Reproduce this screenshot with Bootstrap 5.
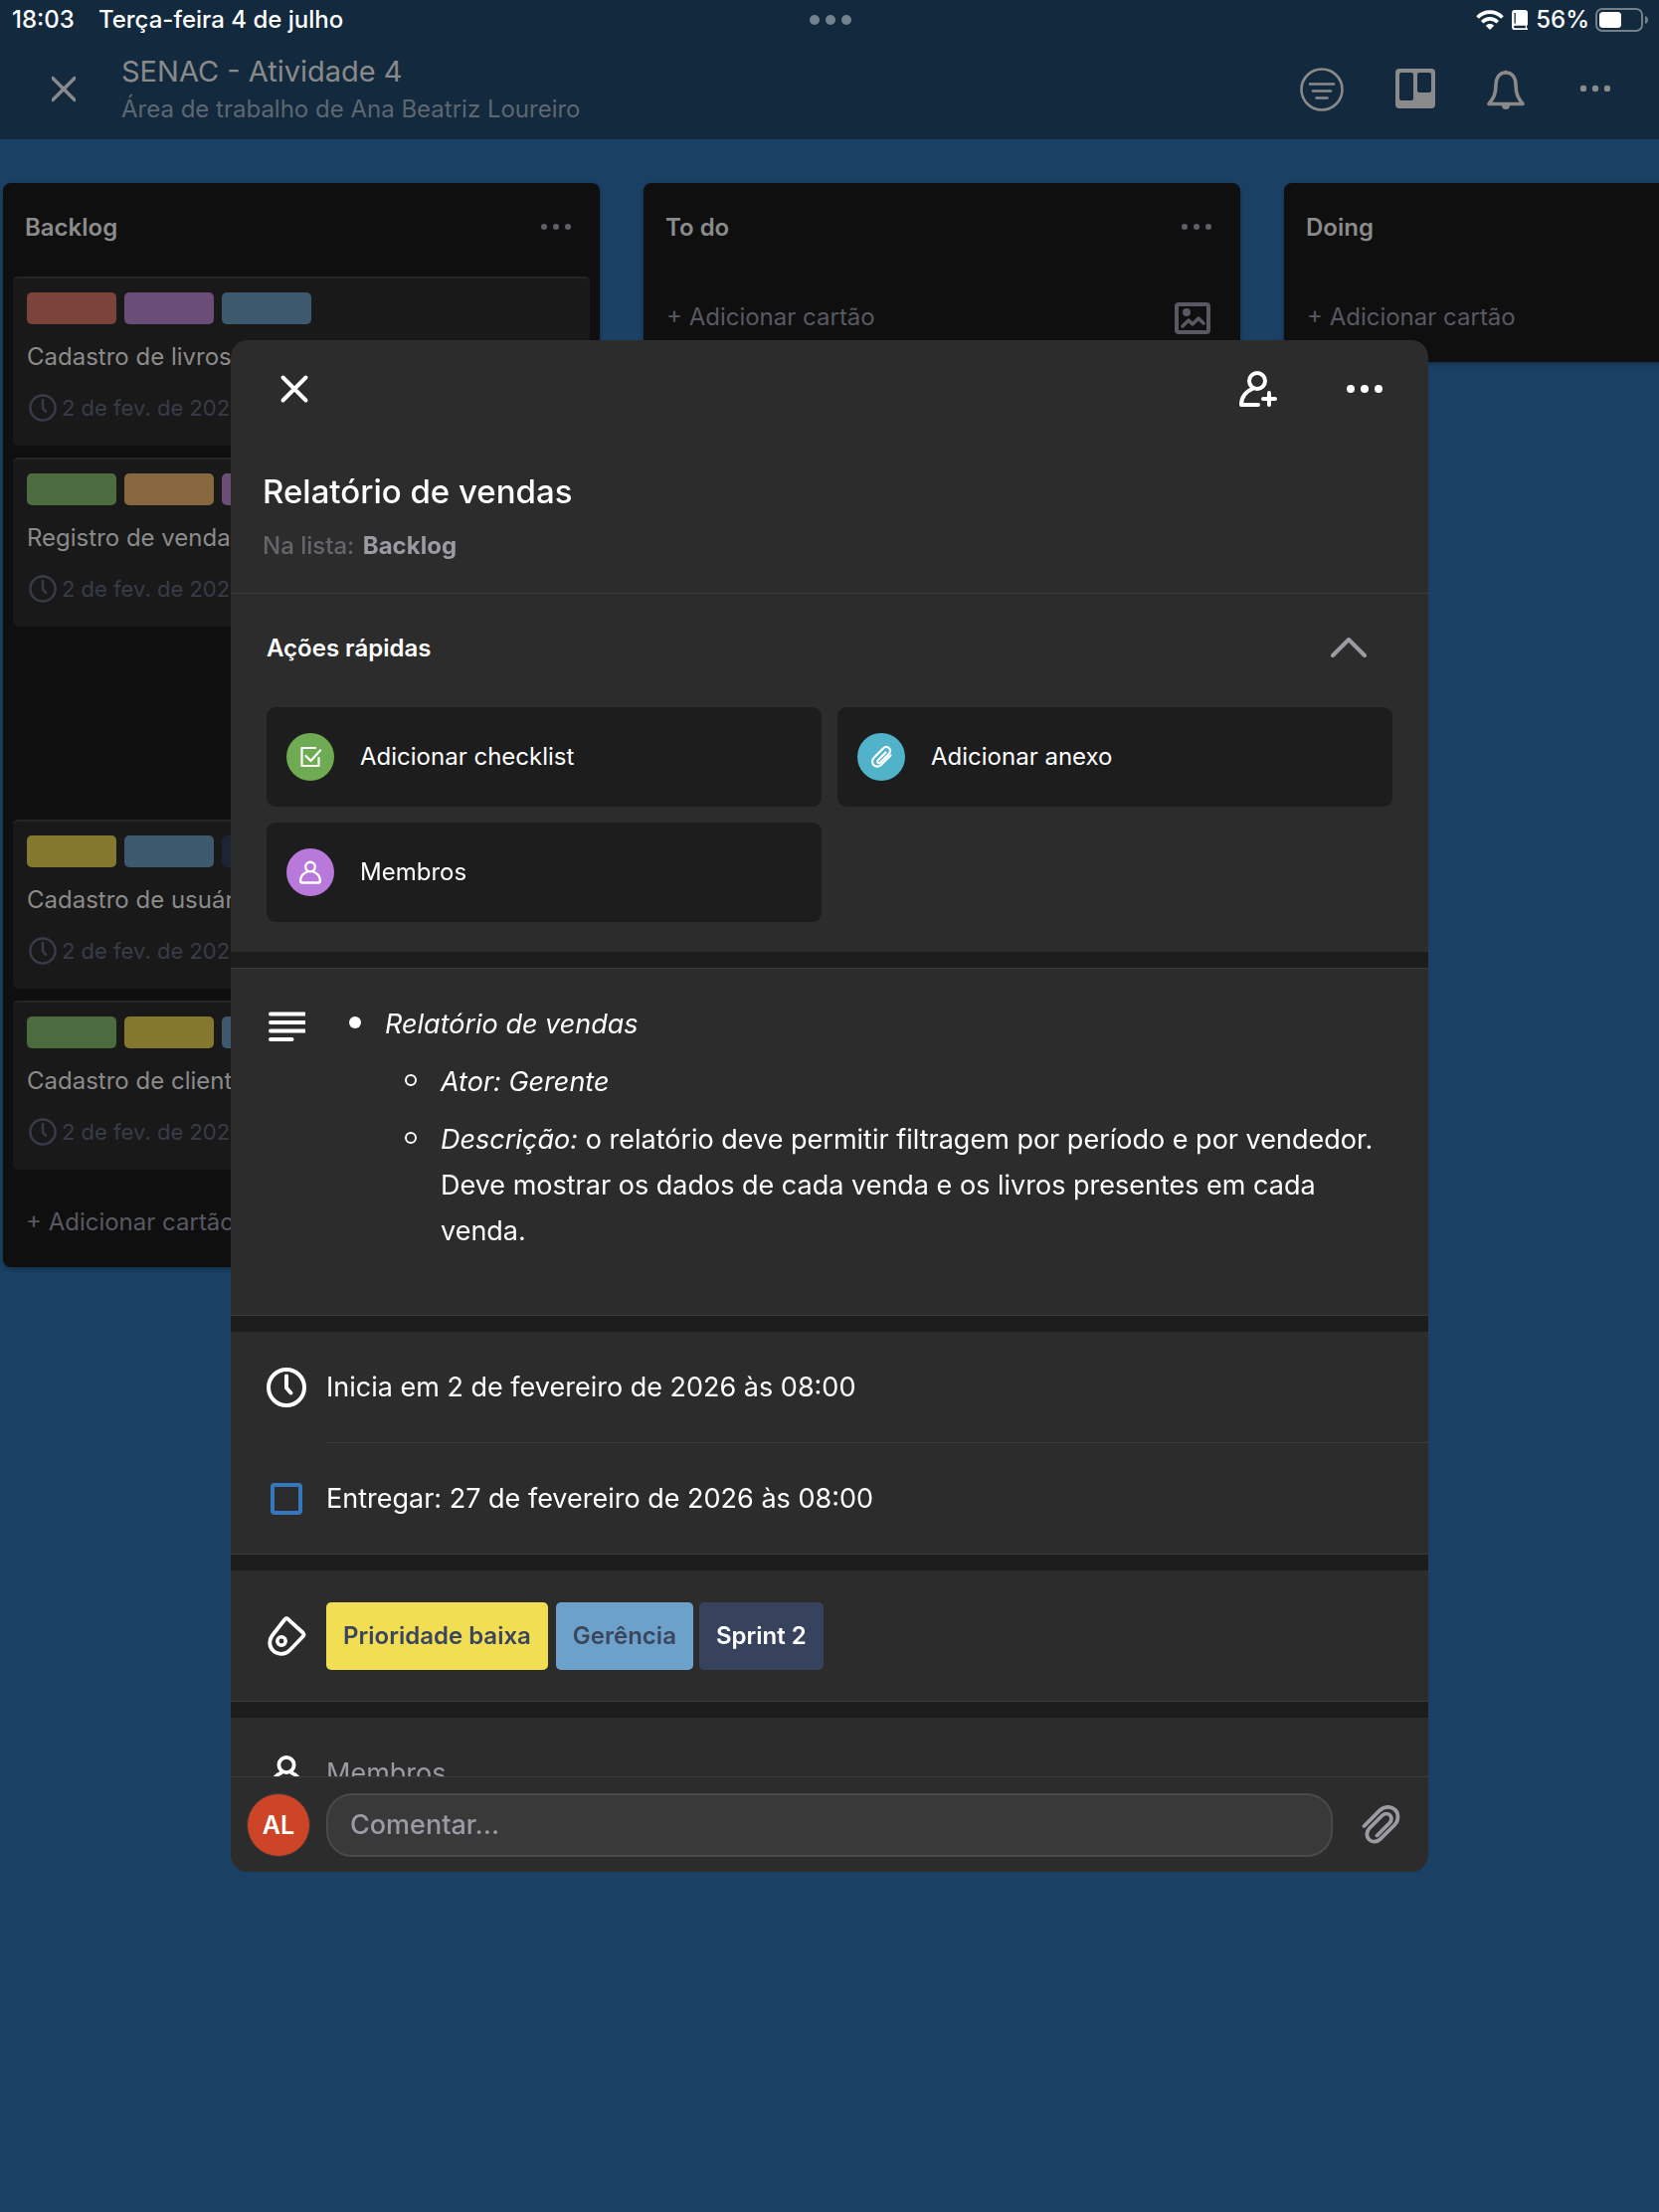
<!DOCTYPE html>
<html lang="pt-BR">
<head>
<meta charset="utf-8">
<meta name="viewport" content="width=device-width, initial-scale=1">
<title>SENAC - Atividade 4</title>
<link href="https://cdn.jsdelivr.net/npm/bootstrap@5.3.0/dist/css/bootstrap.min.css" rel="stylesheet">
<style>
  body { font-family: Inter, Roboto, sans-serif; font-size: 24px; line-height: 32px; background: #1a4064; color: #fff; min-height: 100vh; overflow: hidden; }
  svg { display: block; flex: none; }
  .ico { fill: none; stroke: currentColor; stroke-linecap: round; stroke-linejoin: round; }
  .plain { background: none; border: 0; padding: 0; color: inherit; font: inherit; text-align: left; }
  .app-head { background: #13293d; }
  .status { height: 40px; padding: 0 10px 0 12px; font-weight: 500; font-size: 24px; }
  .status > div { flex: 1 1 0; }
  .status .battery { margin-left: 6px; }
  .board-bar { height: 100px; padding: 0 49px 0 52px; color: #8a8a8a; }
  .board-titles { margin-left: 46px; padding-top: 2px; }
  .board-name { font-size: 29px; line-height: 38px; }
  .board-area { font-size: 24px; line-height: 38px; color: #5c6770; }
  .board-tools { gap: 52px; }
  .lists { padding: 44px 0 16px 3px; gap: 44px; overflow: hidden; }
  .list-col { flex: 0 0 600px; background: #0f0f0f; border-radius: 8px; box-shadow: 0 2px 4px rgba(0,0,0,.3); color: #8b8b8b; }
  .col-head { height: 90px; padding: 0 29px 0 22px; color: #5f6067; }
  .col-head h2 { font-size: 24px; line-height: 32px; font-weight: 600; color: #8b8b8b; }
  .col-foot { height: 90px; padding: 0 30px 0 23px; color: #585962; }
  .cards { padding: 4px 10px 8px; gap: 12px; }
  .task { height: 170px; background: #191919; border-top: 2px solid #262626; border-radius: 5px; padding: 14px; }
  .task.moving { visibility: hidden; }
  .chip { width: 90px; height: 32px; border-radius: 5px; }
  .c-red { background: #7b443b; } .c-purple { background: #6a4e78; } .c-blue { background: #3c596e; }
  .c-green { background: #4c6b3f; } .c-orange { background: #876740; } .c-yellow { background: #83782d; } .c-navy { background: #1d2435; }
  .task-name { margin-top: 17px; }
  .task-date { margin-top: 19px; gap: 5px; padding-left: 2px; font-size: 22px; color: #383c48; white-space: nowrap; }
  .overlay { position: fixed; inset: 0; z-index: 10; }
  .sheet { width: calc(100% - 464px); height: calc(100% - 684px); background: #2c2c2c; border-radius: 17px; overflow: hidden; }
  .sheet-top { height: 98px; padding: 0 44px 0 48px; }
  .sheet-tools { gap: 67px; }
  .sheet-title { padding: 24px 32px 22px; border-bottom: 1px solid #3a3a3a; }
  .sheet-title h1 { font-size: 33px; line-height: 60px; font-weight: 500; }
  .in-list { line-height: 50px; font-weight: 500; color: #66656a; }
  .in-list strong { color: #9c9ba3; font-weight: 700; margin-left: 2px; }
  .sheet-scroll { flex: 1 1 0; min-height: 0; overflow: hidden; background: #1d1d1d; }
  .part { background: #2c2c2c; border-bottom: 1px solid #3a3a3a; margin-bottom: 16px; }
  .part.quick { border: 0; padding: 0 36px 30px; }
  .quick-head { height: 110px; margin-bottom: 4px; padding-right: 26px; }
  .quick-head h2 { font-size: 24px; line-height: 32px; font-weight: 600; }
  .quick-grid { display: grid; grid-template-columns: 1fr 1fr; gap: 16px; }
  .quick-btn { height: 100px; padding: 0 20px; gap: 26px; border-radius: 9px; background: #1d1d1d; }
  .disc { width: 48px; height: 48px; border-radius: 50%; flex: none; }
  .d-green { background: #6eab52; } .d-cyan { background: #51b3ca; } .d-violet { background: #b879db; }
  .lead-ico { width: 40px; flex: none; }
  .big { font-size: 27px; line-height: 46px; }
  .desc { border-top: 1px solid #3a3a3a; padding: 33px 36px 61px; gap: 43px; }
  .desc ul { list-style: none; margin: 0; padding: 0; }
  .desc li { padding-left: 36px; }
  .desc li::before { content: ""; display: inline-block; width: 12px; height: 12px; border-radius: 50%; background: #fff; margin: 0 24px 0 -36px; vertical-align: 5px; }
  .desc ul ul { padding-left: 20px; }
  .desc ul ul li { margin-top: 12px; }
  .desc ul ul li::before { background: none; border: 2px solid #fff; }
  .line-row { padding-left: 36px; gap: 20px; }
  .line-row > .cell { flex: 1; height: 111px; }
  .line-row > .ruled { height: 112px; border-bottom: 1px solid #3a3a3a; }
  .due-box { appearance: none; width: 32px; height: 32px; border: 4px solid #3478be; border-radius: 4px; background: none; margin: 0; }
  .tags { padding: 32px 36px 31px; }
  .tag { height: 68px; padding: 0 17px; border-radius: 5px; font-size: 24px; font-weight: 600; color: #3b465c; }
  .t-yellow { background: #f1de53; } .t-blue { background: #6ca1cb; margin-left: 8px; } .t-navy { background: #37435d; color: #fff; margin-left: 6px; }
  .muted { color: #9c9ba3; }
  .compose { height: 96px; border-top: 1px solid #3d3d3d; padding: 0 28px 0 16px; gap: 16px; }
  .avatar { width: 64px; height: 64px; border-radius: 50%; border: 1px solid #3a3a3a; background: #cd4526; font-size: 25px; font-weight: 600; flex: none; }
  .compose input { flex: 1; min-width: 0; height: 64px; border: 2px solid #4a4a4a; border-radius: 26px; background: #393939; color: #fff; padding: 0 22px; font-size: 27px; font-weight: 500; outline: 0; }
  .compose input::placeholder { color: #9c9ba3; opacity: 1; }
  .compose .plain { margin-left: 12px; }
</style>
<script src="https://cdn.jsdelivr.net/npm/bootstrap@5.3.0/dist/js/bootstrap.bundle.min.js"></script>
</head>
<body>
<svg width="0" height="0" class="position-absolute" aria-hidden="true">
  <symbol id="i-clock" viewBox="0 0 40 40"><circle cx="20" cy="20" r="18"/><path d="M20 8.500V20.500L24.500 25.500"/></symbol>
  <symbol id="i-clip" viewBox="0 0 40 40"><path d="M2.500 21 17.500 5.800C22.500.8 29.500.8 33.500 4.500S37.500 15.500 33 20L19 33.800C15.500 37.300 10.500 37.500 7.500 34.500S4.500 26.500 8 23L20.500 10.500C23 8 26.500 8 28.500 10S30.500 15.500 28 18L15.500 30.500" transform="translate(1 0)"/></symbol>
  <symbol id="i-clip-sm" viewBox="0 0 24 24"><path d="M16.500 7.500 8.800 15.300C8 16.200 8 17.200 8.700 17.800S10.300 18.300 11.200 17.500L19.500 9.200C21.500 7.200 21.500 4.700 19.900 3.200S15.800 1.700 13.900 3.600L5 12.500C2.500 15 2.500 18.300 4.500 20.300S9.800 22.200 12.200 19.800L21.500 10.500"/></symbol>
  <symbol id="i-user" viewBox="0 0 40 40"><circle cx="20" cy="11" r="8"/><path d="M14.500 19.500C8 22 3.500 27.500 3.500 34.500Q3.500 37.500 6 37.500H34Q36.500 37.500 36.500 34.500C36.500 27.500 32 22 25.500 19.500"/></symbol>
</svg>

<header class="app-head">
  <div class="status d-flex align-items-center">
    <div class="d-flex"><span>18:03</span><span class="ms-4">Terça-feira 4 de julho</span></div>
    <svg width="42" height="10" viewBox="0 0 42 10" fill="#73818c"><circle cx="5" cy="5" r="5"/><circle cx="21" cy="5" r="5"/><circle cx="37" cy="5" r="5"/></svg>
    <div class="d-flex align-items-center justify-content-end">
      <svg width="28" height="20" viewBox="0 0 28 20" fill="none" stroke="#fff" stroke-width="3.600"><path d="M1.500 7.500C8.500.3 19.500.3 26.500 7.500M6.200 12.200C10.600 7.800 17.400 7.800 21.800 12.200"/><path d="M14 20 9.800 15.700C12 13.500 16 13.500 18.200 15.700Z" fill="#fff" stroke="none"/></svg>
      <svg width="16" height="20" viewBox="0 0 16 20" fill="#fff" class="ms-2"><path fill-rule="evenodd" d="M3 0H13Q16 0 16 3V14.500Q16 15.500 15 15.700V18.300H16V20H2.800Q0 20 0 17.200V3Q0 0 3 0ZM2.500 3V13.500H3.800V3ZM3.500 15.700Q2 15.700 2 17T3.500 18.300H13.800V15.700Z"/></svg>
      <span class="ms-2">56%</span>
      <svg width="54" height="24" viewBox="0 0 54 24" class="battery"><rect x="1" y="1" width="46" height="22" rx="6" fill="none" stroke="#71808b" stroke-width="2"/><rect x="4" y="4" width="22" height="16" rx="3.500" fill="#fff"/><path d="M50 8Q53 9 53 12T50 16Z" fill="#71808b"/></svg>
    </div>
  </div>
  <div class="board-bar d-flex align-items-center justify-content-between">
    <div class="d-flex align-items-center">
      <button class="plain" type="button" aria-label="Fechar quadro"><svg class="ico" width="24" height="28" viewBox="0 0 24 28" stroke-width="3.400"><path d="M1 2.500 23 24.500M23 2.500 1 24.500"/></svg></button>
      <div class="board-titles">
        <div class="board-name">SENAC - Atividade 4</div>
        <div class="board-area">Área de trabalho de Ana Beatriz Loureiro</div>
      </div>
    </div>
    <div class="board-tools d-flex align-items-center">
      <button class="plain" type="button" aria-label="Filtrar"><svg class="ico" width="44" height="44" viewBox="0 0 44 44" stroke-width="2.600"><circle cx="22" cy="22" r="20.500"/><path d="M10 16.500H34M13 23.500H31M16.500 30.500H27.500"/></svg></button>
      <button class="plain" type="button" aria-label="Quadros"><svg width="40" height="42" viewBox="0 0 40 42" fill="currentColor"><path fill-rule="evenodd" d="M4 0H36Q40 0 40 4V36Q40 40 36 40H4Q0 40 0 36V4Q0 0 4 0ZM6 4Q4 4 4 6V30Q4 32 6 32H16Q18 32 18 30V6Q18 4 16 4ZM24 4Q22 4 22 6V22Q22 24 24 24H34Q36 24 36 22V6Q36 4 34 4Z"/></svg></button>
      <button class="plain" type="button" aria-label="Notificações"><svg class="ico" width="38" height="40" viewBox="1 0 38 40" stroke-width="3.600"><path d="M20 3C13 3 10 9 10 15 10 25 7.500 29 3 34.500H37C32.500 29 30 25 30 15 30 9 27 3 20 3Z"/><path d="M16 35.500Q16 40 20 40T24 35.500ZM18.500 2.500Q18.500 .5 20 .5T21.500 2.500Z" fill="currentColor" stroke="none"/></svg></button>
      <button class="plain" type="button" aria-label="Mais"><svg width="34" height="10" viewBox="0 0 34 10" fill="currentColor"><circle cx="7" cy="4" r="3.200"/><circle cx="19" cy="4" r="3.200"/><circle cx="31" cy="4" r="3.200"/></svg></button>
    </div>
  </div>
</header>

<main class="lists d-flex align-items-start">
  <section class="list-col">
    <div class="col-head d-flex align-items-center justify-content-between"><h2 class="m-0">Backlog</h2><button class="plain" type="button" aria-label="Opções de Backlog"><svg width="30" height="8" viewBox="0 0 30 8" fill="currentColor"><circle cx="3" cy="3" r="3"/><circle cx="15" cy="3" r="3"/><circle cx="27" cy="3" r="3"/></svg></button></div>
    <div class="cards d-flex flex-column">
      <article class="task"><div class="d-flex gap-2"><span class="chip c-red"></span><span class="chip c-purple"></span><span class="chip c-blue"></span></div><div class="task-name">Cadastro de livros</div><div class="task-date d-flex align-items-center"><svg class="ico" width="28" height="28" stroke-width="3.500"><use href="#i-clock"/></svg>2 de fev. de 202</div></article>
      <article class="task"><div class="d-flex gap-2"><span class="chip c-green"></span><span class="chip c-orange"></span><span class="chip c-purple"></span></div><div class="task-name">Registro de venda</div><div class="task-date d-flex align-items-center"><svg class="ico" width="28" height="28" stroke-width="3.500"><use href="#i-clock"/></svg>2 de fev. de 202</div></article>
      <div class="task moving"></div>
      <article class="task"><div class="d-flex gap-2"><span class="chip c-yellow"></span><span class="chip c-blue"></span><span class="chip c-navy"></span></div><div class="task-name">Cadastro de usuár</div><div class="task-date d-flex align-items-center"><svg class="ico" width="28" height="28" stroke-width="3.500"><use href="#i-clock"/></svg>2 de fev. de 202</div></article>
      <article class="task"><div class="d-flex gap-2"><span class="chip c-green"></span><span class="chip c-yellow"></span><span class="chip c-blue"></span></div><div class="task-name">Cadastro de client</div><div class="task-date d-flex align-items-center"><svg class="ico" width="28" height="28" stroke-width="3.500"><use href="#i-clock"/></svg>2 de fev. de 202</div></article>
    </div>
    <div class="col-foot d-flex align-items-center"><button class="plain" type="button">+ Adicionar cartão</button></div>
  </section>
  <section class="list-col">
    <div class="col-head d-flex align-items-center justify-content-between"><h2 class="m-0">To do</h2><button class="plain" type="button" aria-label="Opções de To do"><svg width="30" height="8" viewBox="0 0 30 8" fill="currentColor"><circle cx="3" cy="3" r="3"/><circle cx="15" cy="3" r="3"/><circle cx="27" cy="3" r="3"/></svg></button></div>
    <div class="col-foot d-flex align-items-center justify-content-between"><button class="plain" type="button">+ Adicionar cartão</button><button class="plain" type="button" aria-label="Adicionar imagem"><svg class="ico" width="36" height="34" viewBox="0 -2 36 34" stroke-width="4"><rect x="2" y="2" width="32" height="28" rx="2"/><circle cx="12" cy="10" r="4" fill="currentColor" stroke="none"/><path d="M8 24 14 18 18 22 24 16 29 21" stroke-width="3.500"/></svg></button></div>
  </section>
  <section class="list-col">
    <div class="col-head d-flex align-items-center"><h2 class="m-0">Doing</h2></div>
    <div class="col-foot d-flex align-items-center"><button class="plain" type="button">+ Adicionar cartão</button></div>
  </section>
</main>

<div class="overlay d-flex align-items-center justify-content-center">
  <div class="sheet d-flex flex-column" role="dialog" aria-labelledby="sheet-name">
    <div class="sheet-top d-flex align-items-center justify-content-between">
      <button class="plain" type="button" aria-label="Fechar"><svg class="ico" width="32" height="32" viewBox="0 0 32 32" stroke-width="4"><path d="M4.500 4.500 27.500 27.500M27.500 4.500 4.500 27.500"/></svg></button>
      <div class="sheet-tools d-flex align-items-center">
        <button class="plain" type="button" aria-label="Adicionar membro"><svg class="ico" width="40" height="38" viewBox="0 0 40 38" stroke-width="4"><circle cx="19" cy="11" r="8"/><path d="M15 18.500C8 21.500 3 27 3 35H20M31 23V35M25 29H37"/></svg></button>
        <button class="plain" type="button" aria-label="Mais ações"><svg width="40" height="8" viewBox="0 0 40 8" fill="currentColor"><circle cx="6" cy="4" r="4"/><circle cx="20" cy="4" r="4"/><circle cx="34" cy="4" r="4"/></svg></button>
      </div>
    </div>
    <div class="sheet-title">
      <h1 class="m-0" id="sheet-name">Relatório de vendas</h1>
      <div class="in-list">Na lista: <strong>Backlog</strong></div>
    </div>
    <div class="sheet-scroll">
      <section class="part quick">
        <div class="quick-head d-flex align-items-center justify-content-between"><h2 class="m-0">Ações rápidas</h2><button class="plain muted" type="button" aria-label="Recolher"><svg class="ico" width="36" height="22" viewBox="0 0 36 22" stroke-width="4"><path d="M2 18 18 2 34 18"/></svg></button></div>
        <div class="quick-grid">
          <button class="plain quick-btn d-flex align-items-center" type="button"><span class="disc d-green d-flex align-items-center justify-content-center"><svg class="ico" width="24" height="24" viewBox="0 0 24 24" stroke-width="2.200"><path d="M17 3H3.500V21H20.500V13M7.500 11 12.500 16 22 5.500"/></svg></span>Adicionar checklist</button>
          <button class="plain quick-btn d-flex align-items-center" type="button"><span class="disc d-cyan d-flex align-items-center justify-content-center"><svg class="ico" width="24" height="24" stroke-width="2.200"><use href="#i-clip-sm"/></svg></span>Adicionar anexo</button>
          <button class="plain quick-btn d-flex align-items-center" type="button"><span class="disc d-violet d-flex align-items-center justify-content-center"><svg class="ico" width="24" height="24" stroke-width="4"><use href="#i-user"/></svg></span>Membros</button>
        </div>
      </section>
      <section class="part desc big d-flex align-items-start">
        <div class="lead-ico d-flex justify-content-center"><svg class="ico mt-2" width="38" height="34" viewBox="0 0 38 34" stroke-width="4"><path d="M3 4.500H37M3 13H37M3 21.500H37M3 30H24.500"/></svg></div>
        <ul>
          <li><em>Relatório de vendas</em>
            <ul>
              <li><em>Ator: Gerente</em></li>
              <li><em>Descrição:</em> o relatório deve permitir filtragem por período e por vendedor. Deve mostrar os dados de cada venda e os livros presentes em cada venda.</li>
            </ul>
          </li>
        </ul>
      </section>
      <section class="part big">
        <div class="line-row d-flex align-items-center"><div class="lead-ico d-flex justify-content-center"><svg class="ico" width="40" height="40" stroke-width="4"><use href="#i-clock"/></svg></div><div class="cell ruled d-flex align-items-center">Inicia em 2 de fevereiro de 2026 às 08:00</div></div>
        <div class="line-row d-flex align-items-center"><div class="lead-ico d-flex justify-content-center"><input class="due-box" type="checkbox" id="due"></div><label class="cell d-flex align-items-center" for="due">Entregar: 27 de fevereiro de 2026 às 08:00</label></div>
      </section>
      <section class="part tags d-flex align-items-center">
        <div class="lead-ico d-flex justify-content-center me-1"><svg class="ico" width="40" height="40" viewBox="0 0 40 40" stroke-width="3.800"><path d="M21.500 2.800 36.500 16.500Q38.500 18.500 36.500 20.500L23 34.500C18 39.500 10.500 38.500 6.500 34.500S2 24 6 19L18.500 3Q20 1.500 21.500 2.800Z"/><circle cx="15" cy="25" r="4.200" stroke-width="3.500"/></svg></div>
        <div class="d-flex ms-3">
          <span class="tag t-yellow d-flex align-items-center">Prioridade baixa</span>
          <span class="tag t-blue d-flex align-items-center">Gerência</span>
          <span class="tag t-navy d-flex align-items-center">Sprint 2</span>
        </div>
      </section>
      <section class="part big">
        <div class="line-row d-flex align-items-center"><div class="lead-ico d-flex justify-content-center"><svg class="ico" width="38" height="38" stroke-width="4"><use href="#i-user"/></svg></div><div class="cell muted d-flex align-items-center">Membros</div></div>
      </section>
    </div>
    <div class="compose d-flex align-items-center">
      <span class="avatar d-flex align-items-center justify-content-center">AL</span>
      <input type="text" placeholder="Comentar..." aria-label="Comentar">
      <button class="plain muted" type="button" aria-label="Anexar"><svg class="ico" width="40" height="40" stroke-width="3.800"><use href="#i-clip"/></svg></button>
    </div>
  </div>
</div>
</body>
</html>
